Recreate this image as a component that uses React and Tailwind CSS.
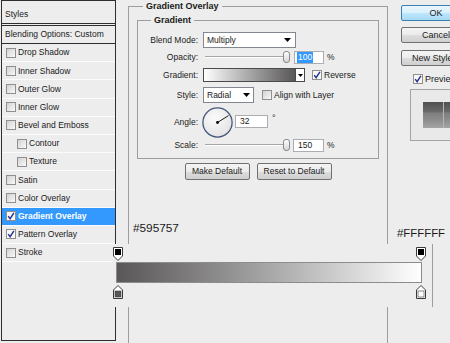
import React from 'react';

const FONT = "font-['Liberation_Sans',Arial,sans-serif]";

function Check({ checked, className = '' }) {
  return (
    <span
      className={`flex h-[10px] w-[10px] shrink-0 items-center justify-center border border-[#8f8f8f] ${
        checked ? 'bg-[#f8f8f8]' : 'bg-gradient-to-br from-[#d2d2d2] to-[#f9f9f9]'
      } ${className}`}
    >
      {checked && (
        <svg width="8" height="8" viewBox="0 0 8 8">
          <path d="M1.2 4.2 L3.1 6.7 L6.9 0.8" fill="none" stroke="#22318f" strokeWidth="1.4" />
        </svg>
      )}
    </span>
  );
}

function Arrow() {
  return (
    <svg width="7" height="4" viewBox="0 0 7 4">
      <path d="M0 0 H7 L3.5 4 Z" fill="#000" />
    </svg>
  );
}

function Slider() {
  return (
    <div className="relative h-[13px] w-[88px]">
      <div className="absolute left-[2px] right-[4px] top-[5px] h-[2px] border-b border-t border-b-white border-t-[#a5a5a5]" />
      <div className="absolute left-[80px] top-0 h-[12px] w-[7px] rounded-[3px] border border-[#8a8a8a] bg-gradient-to-b from-white to-[#d4d4d4]" />
    </div>
  );
}

function Row({ label, className, children }) {
  return (
    <div className={`flex items-center ${className}`}>
      <span className="w-[60px] text-right">{label}</span>
      <div className="ml-[5px] flex h-full items-center">{children}</div>
    </div>
  );
}

function Btn({ children, className = '' }) {
  return (
    <div
      className={`flex items-center justify-center rounded-[2px] border border-[#707070] bg-[linear-gradient(#f4f4f4,#ebebeb_50%,#dddddd_51%,#cfcfcf)] ${className}`}
    >
      {children}
    </div>
  );
}

const rows = [
  ['Drop Shadow', false, false],
  ['Inner Shadow', false, false],
  ['Outer Glow', false, false],
  ['Inner Glow', false, false],
  ['Bevel and Emboss', false, false],
  ['Contour', true, false],
  ['Texture', true, false],
  ['Satin', false, false],
  ['Color Overlay', false, false],
  ['Gradient Overlay', false, true, true],
  ['Pattern Overlay', false, true],
  ['Stroke', false, false],
];

function LeftPanel() {
  return (
    <div className="ml-[1px] flex h-[341px] w-[115px] shrink-0 flex-col border border-[#2e2e2e]">
      <div className="flex h-[25px] shrink-0 items-center border-b-[3px] border-double border-[#2e2e2e] pl-[3px] pt-[4px]">
        Styles
      </div>
      <div className="flex h-[18px] shrink-0 items-center border-b border-[#2e2e2e] pl-[3px]">
        Blending Options: Custom
      </div>
      {rows.map(([name, sub, checked, active]) => (
        <div
          key={name}
          className={`flex h-[18.2px] shrink-0 items-center gap-[2px] border-b border-[#fbfbfb] ${
            sub ? 'pl-[15px]' : 'pl-[4px]'
          } ${active ? 'bg-[#3399ff] font-bold text-white' : ''}`}
        >
          <Check checked={checked} />
          <span>{name}</span>
        </div>
      ))}
    </div>
  );
}

function Middle() {
  return (
    <div className="ml-[12px] w-[260px] shrink-0">
      <fieldset className="m-0 h-[400px] min-w-0 border border-[#9d9d9d] p-0">
        <legend className="ml-[14px] px-[3px] text-[9px] font-bold leading-[12px]">Gradient Overlay</legend>
        <div className="px-[8px]">
          <fieldset className="m-0 mt-[2px] min-w-0 border border-[#9d9d9d] p-0 pb-[6px]">
            <legend className="ml-[13px] px-[3px] text-[9px] font-bold leading-[12px]">Gradient</legend>
            <Row label="Blend Mode:" className="mt-[6px] h-[16px]">
              <div className="flex h-[16px] w-[93px] items-center justify-between border border-[#828790] bg-white pl-[3px] pr-[4px]">
                <span>Multiply</span>
                <Arrow />
              </div>
            </Row>
            <Row label="Opacity:" className="mt-[3px] h-[13px]">
              <Slider />
              <div className="ml-[3px] flex h-[13px] w-[30px] items-center border border-[#abadb3] bg-white pl-[2px]">
                <span className="bg-[#3399ff] px-[1px] py-[1px] text-white">100</span>
              </div>
              <span className="ml-[3px]">%</span>
            </Row>
            <Row label="Gradient:" className="mt-[4px] h-[14px]">
              <div className="flex h-[14px] border border-[#4a4a4a]">
                <div className="h-full w-[91px] bg-gradient-to-r from-white to-[#595757]" />
                <div className="flex h-full w-[9px] items-center justify-center border-l border-[#4a4a4a] bg-white">
                  <svg width="5" height="3" viewBox="0 0 5 3">
                    <path d="M0 0 H5 L2.5 3 Z" fill="#000" />
                  </svg>
                </div>
              </div>
              <Check checked className="ml-[7px]" />
              <span className="ml-[2px]">Reverse</span>
            </Row>
            <Row label="Style:" className="mt-[5px] h-[16px]">
              <div className="flex h-[16px] w-[51px] items-center justify-between border border-[#828790] bg-white pl-[3px] pr-[3px]">
                <span>Radial</span>
                <Arrow />
              </div>
              <Check className="ml-[8px]" />
              <span className="ml-[2px]">Align with Layer</span>
            </Row>
            <Row label="Angle:" className="mt-[4px] h-[31px]">
              <svg width="31" height="31" viewBox="0 0 31 31" className="-ml-[1px]">
                <defs>
                  <radialGradient id="dialg" cx="0.4" cy="0.35" r="0.7">
                    <stop offset="0" stopColor="#fbfbfb" />
                    <stop offset="1" stopColor="#e2e2e2" />
                  </radialGradient>
                </defs>
                <circle cx="15.5" cy="15.5" r="14.6" fill="url(#dialg)" stroke="#45587c" strokeWidth="1.3" />
                <line x1="15.5" y1="15.5" x2="26.5" y2="8.6" stroke="#1a1a1a" strokeWidth="1" />
                <circle cx="15.5" cy="15.5" r="1.4" fill="#000" />
              </svg>
              <div className="mb-[3px] ml-[2px] flex h-[13px] w-[33px] items-center border border-[#abadb3] bg-white pl-[4px]">
                32
              </div>
              <span className="mb-[8px] ml-[4px] text-[9px]">°</span>
            </Row>
            <Row label="Scale:" className="mt-[1px] h-[13px]">
              <Slider />
              <div className="ml-[2px] flex h-[13px] w-[31px] items-center border border-[#abadb3] bg-white pl-[4px]">
                150
              </div>
              <span className="ml-[3px]">%</span>
            </Row>
          </fieldset>
          <div className="mt-[4px] flex justify-center gap-[7px]">
            <Btn className="h-[17px] w-[65px]">Make Default</Btn>
            <Btn className="h-[17px] w-[75px]">Reset to Default</Btn>
          </div>
        </div>
      </fieldset>
    </div>
  );
}

function RightCol() {
  return (
    <div className="ml-[13px] flex w-[80px] shrink-0 flex-col text-[9px]">
      <div className="mt-[5px] flex h-[16px] w-[70px] items-center justify-center rounded-[2px] border border-[#3c7fb1] bg-[linear-gradient(#eaf6fd,#d9f0fc_50%,#bee6fd_51%,#a7d9f5)]">
        OK
      </div>
      <Btn className="mt-[6px] h-[16px] w-[70px]">Cancel</Btn>
      <Btn className="mt-[7px] h-[16px] w-[70px]">New Style...</Btn>
      <div className="ml-[12px] mt-[7px] flex h-[12px] items-center gap-[2px]">
        <Check checked />
        <span>Preview</span>
      </div>
      <div className="ml-[9px] mt-[4px] h-[52px] w-[70px] border border-[#a3a3a3] bg-[#e9e9e9] pl-[12px] pt-[12px]">
        <div className="relative h-[26px] w-[40px] bg-[linear-gradient(180deg,#4f4f4f_0%,#6a6a6a_38%,#7e7e7e_42%,#8e8e8e_70%,#a4a4a4_100%)]">
          <div className="absolute left-[20px] top-0 h-full w-[1px] bg-[#b5b5b5]" />
        </div>
      </div>
    </div>
  );
}

function StopTop({ className }) {
  return (
    <svg width="10" height="14" viewBox="0 0 10 14" className={className}>
      <path d="M0.5 0.5 H9.5 V9 L5 13.5 L0.5 9 Z" fill="#fff" stroke="#3a3a3a" strokeWidth="1" />
      <rect x="2" y="2" width="6" height="6" fill="#000" />
    </svg>
  );
}

function StopBottom({ color, className }) {
  return (
    <svg width="10" height="14" viewBox="0 0 10 14" className={className}>
      <path d="M5 0.5 L9.5 5 V13.5 H0.5 V5 Z" fill="#fff" stroke="#3a3a3a" strokeWidth="1" />
      <rect x="2" y="6" width="6" height="6" fill={color} stroke="#3a3a3a" strokeWidth="0.6" />
    </svg>
  );
}

function GradientEditor() {
  return (
    <>
      <div className="absolute left-[112px] top-[244px] h-[63px] w-[321px] border-r border-[#9d9d9d] bg-[#ededed]">
        <div className="absolute left-[4px] top-[18px] h-[21px] w-[306px] border border-[#8c8c8c] bg-gradient-to-r from-[#595757] to-white" />
        <StopTop className="absolute left-[1px] top-[3px]" />
        <StopTop className="absolute left-[304px] top-[3px]" />
        <StopBottom color="#595757" className="absolute left-[1px] top-[41px]" />
        <StopBottom color="#ffffff" className="absolute left-[304px] top-[41px]" />
      </div>
      <span className="absolute left-[133px] top-[222px] text-[11.8px] leading-[12px] text-[#1a1a1a]">#595757</span>
      <span className="absolute left-[397px] top-[227px] text-[11.4px] leading-[12px] text-[#1a1a1a]">#FFFFFF</span>
    </>
  );
}

export default function App() {
  return (
    <div
      className={`relative flex h-[343px] w-[450px] overflow-hidden bg-[#ededed] text-[8.5px] leading-none text-[#1a1a1a] ${FONT}`}
    >
      <LeftPanel />
      <Middle />
      <RightCol />
      <GradientEditor />
    </div>
  );
}
